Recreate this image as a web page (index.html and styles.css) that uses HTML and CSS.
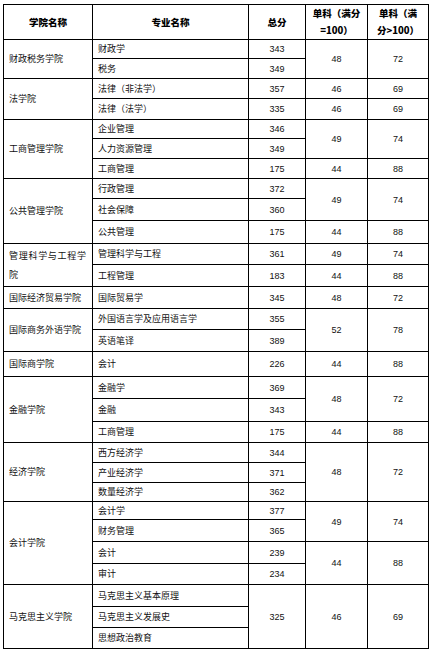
FILE: index.html
```html
<!DOCTYPE html>
<html lang="zh-CN">
<head>
<meta charset="utf-8">
<title>分数线</title>
<link rel="stylesheet" href="styles.css">
</head>
<body>
<table class="grid">
<colgroup><col class="c1"><col class="c2"><col class="c3"><col class="c4"><col class="c5"></colgroup>
<thead>
<tr class="hd"><th>学院名称</th><th>专业名称</th><th>总分</th><th>单科（满分<br>=100）</th><th>单科（满<br>分&gt;100）</th></tr>
</thead>
<tbody>
<tr class="h19"><td rowspan="2" class="sch">财政税务学院</td><td class="maj">财政学</td><td class="num">343</td><td rowspan="2" class="num">48</td><td rowspan="2" class="num">72</td></tr>
<tr class="h20"><td class="maj">税务</td><td class="num">349</td></tr>

<tr class="h20"><td rowspan="2" class="sch">法学院</td><td class="maj">法律（非法学）</td><td class="num">357</td><td class="num">46</td><td class="num">69</td></tr>
<tr class="h21"><td class="maj">法律（法学）</td><td class="num">335</td><td class="num">46</td><td class="num">69</td></tr>

<tr class="h19"><td rowspan="3" class="sch">工商管理学院</td><td class="maj">企业管理</td><td class="num">346</td><td rowspan="2" class="num">49</td><td rowspan="2" class="num">74</td></tr>
<tr class="h20"><td class="maj">人力资源管理</td><td class="num">349</td></tr>
<tr class="h20"><td class="maj">工商管理</td><td class="num">175</td><td class="num">44</td><td class="num">88</td></tr>

<tr class="h20"><td rowspan="3" class="sch">公共管理学院</td><td class="maj">行政管理</td><td class="num">372</td><td rowspan="2" class="num">49</td><td rowspan="2" class="num">74</td></tr>
<tr class="h22"><td class="maj">社会保障</td><td class="num">360</td></tr>
<tr class="h23"><td class="maj">公共管理</td><td class="num">175</td><td class="num">44</td><td class="num">88</td></tr>

<tr class="h21"><td rowspan="2" class="sch just">管理科学与工程学院</td><td class="maj">管理科学与工程</td><td class="num">361</td><td class="num">49</td><td class="num">74</td></tr>
<tr class="h22"><td class="maj">工程管理</td><td class="num">183</td><td class="num">44</td><td class="num">88</td></tr>

<tr class="h22"><td class="sch">国际经济贸易学院</td><td class="maj">国际贸易学</td><td class="num">345</td><td class="num">48</td><td class="num">72</td></tr>

<tr class="h21"><td rowspan="2" class="sch">国际商务外语学院</td><td class="maj">外国语言学及应用语言学</td><td class="num">355</td><td rowspan="2" class="num">52</td><td rowspan="2" class="num">78</td></tr>
<tr class="h22"><td class="maj">英语笔译</td><td class="num">389</td></tr>

<tr class="h25"><td class="sch">国际商学院</td><td class="maj">会计</td><td class="num">226</td><td class="num">44</td><td class="num">88</td></tr>

<tr class="h22"><td rowspan="3" class="sch">金融学院</td><td class="maj">金融学</td><td class="num">369</td><td rowspan="2" class="num">48</td><td rowspan="2" class="num">72</td></tr>
<tr class="h23"><td class="maj">金融</td><td class="num">343</td></tr>
<tr class="h21"><td class="maj">工商管理</td><td class="num">175</td><td class="num">44</td><td class="num">88</td></tr>

<tr class="h20"><td rowspan="3" class="sch">经济学院</td><td class="maj">西方经济学</td><td class="num">344</td><td rowspan="3" class="num">48</td><td rowspan="3" class="num">72</td></tr>
<tr class="h20"><td class="maj">产业经济学</td><td class="num">371</td></tr>
<tr class="h19"><td class="maj">数量经济学</td><td class="num">362</td></tr>

<tr class="h18"><td rowspan="4" class="sch">会计学院</td><td class="maj">会计学</td><td class="num">377</td><td rowspan="2" class="num">49</td><td rowspan="2" class="num">74</td></tr>
<tr class="h22"><td class="maj">财务管理</td><td class="num">365</td></tr>
<tr class="h22"><td class="maj">会计</td><td class="num">239</td><td rowspan="2" class="num">44</td><td rowspan="2" class="num">88</td></tr>
<tr class="h21"><td class="maj">审计</td><td class="num">234</td></tr>

<tr class="h22"><td rowspan="3" class="sch">马克思主义学院</td><td class="maj">马克思主义基本原理</td><td rowspan="3" class="num">325</td><td rowspan="3" class="num">46</td><td rowspan="3" class="num">69</td></tr>
<tr class="h21"><td class="maj">马克思主义发展史</td></tr>
<tr class="h21"><td class="maj">思想政治教育</td></tr>
</tbody>
</table>
</body>
</html>
```

FILE: styles.css
```css
html, body {
  margin: 0;
  padding: 0;
  background: #ffffff;
}

.grid {
  border-collapse: collapse;
  table-layout: fixed;
  width: 425px;
  margin: 4px 0 0 3px;
  font-family: "Noto Sans CJK SC", "Noto Sans", sans-serif;
  font-size: 9px;
  color: #111111;
}

.c1 { width: 89px; }
.c2 { width: 156px; }
.c3 { width: 57px; }
.c4 { width: 62px; }
.c5 { width: 61px; }

.grid th,
.grid td {
  border: 1px solid #000000;
  padding: 0 5px;
  line-height: 12px;
  vertical-align: middle;
  overflow: hidden;
}

.grid th {
  font-weight: 900;
  font-size: 9.5px;
  text-align: center;
  line-height: 17px;
  color: #000000;
  padding: 0 2px;
}

.hd { height: 34px; }

.h18 { height: 18px; }
.h19 { height: 19px; }
.h20 { height: 20px; }
.h21 { height: 21px; }
.h22 { height: 22px; }
.h23 { height: 23px; }
.h25 { height: 25px; }

.sch {
  text-align: left;
  padding-left: 4px;
  padding-right: 2px;
  white-space: nowrap;
}

.sch.just {
  white-space: normal;
  text-align: justify;
  padding-right: 6px;
  line-height: 19px;
}

.maj {
  text-align: left;
  padding-left: 5px;
  white-space: nowrap;
}

.num {
  text-align: center;
  font-family: "Liberation Sans", Arial, sans-serif;
  font-size: 9px;
}
```
